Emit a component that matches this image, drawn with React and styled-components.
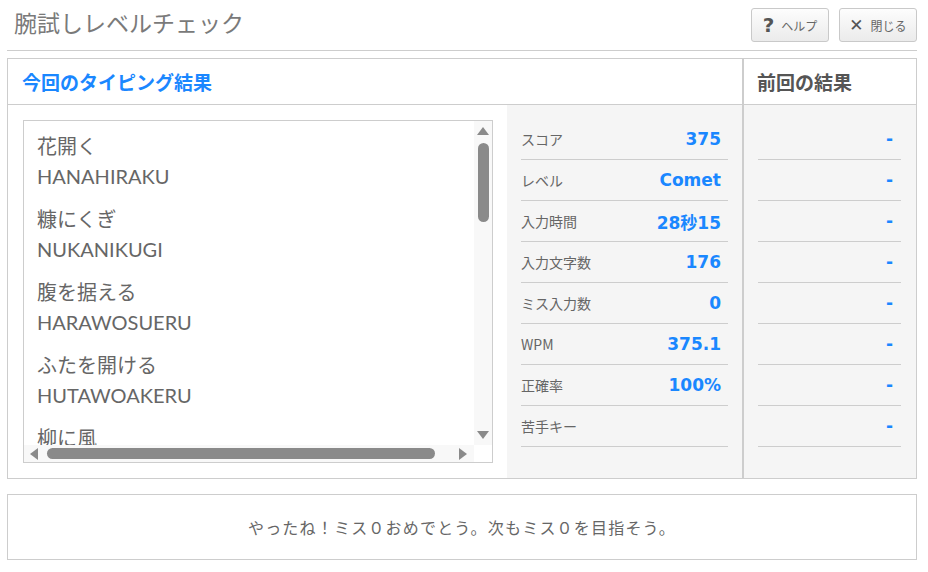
import React from 'react';
import styled, { createGlobalStyle } from 'styled-components';

const GlobalStyle = createGlobalStyle`
  * { box-sizing: border-box; }
  body {
    margin: 0;
    background: #fff;
    color: #666;
    font-family: "Noto Sans CJK JP", "Noto Sans", sans-serif;
  }
`;

const BLUE = '#1a87ff';
const LINE = '#cdcdcd';

const Header = styled.header`
  display: flex;
  align-items: flex-start;
  justify-content: space-between;
  height: 51px;
  margin: 0 11px 0 7px;
  border-bottom: 1px solid ${LINE};
`;

const Title = styled.h1`
  margin: 0;
  padding: 7px 0 0 7px;
  font-size: 23px;
  line-height: 30px;
  font-weight: normal;
  color: #7a7a7a;
`;

const Tools = styled.div`
  display: flex;
  gap: 10px;
  padding-top: 8px;
`;

const ToolButton = styled.button`
  display: flex;
  align-items: center;
  justify-content: center;
  gap: 7px;
  width: 78px;
  height: 34px;
  padding: 0;
  border: 1px solid #c9c9c9;
  border-radius: 3px;
  background: linear-gradient(#fdfdfd, #ebebeb);
  color: #666;
  font-family: "Noto Sans CJK JP", sans-serif;
  font-size: 12px;
`;

const ToolIcon = styled.span`
  font-family: "DejaVu Sans", sans-serif;
  font-weight: bold;
  font-size: ${p => p.size}px;
  color: #555;
  line-height: 1;
`;

const Panel = styled.section`
  display: grid;
  grid-template-columns: 1fr 173px;
  margin: 7px 11px 0 7px;
  border: 1px solid ${LINE};
`;

const Column = styled.div`
  display: flex;
  flex-direction: column;
  border-${p => p.side}: 1px solid ${LINE};
`;

const ColumnHead = styled.h2`
  display: flex;
  align-items: center;
  height: 46px;
  margin: 0;
  padding-left: ${p => p.indent}px;
  border-bottom: 1px solid ${LINE};
  font-size: 19px;
  font-weight: bold;
  color: ${p => p.color};
`;

const Body = styled.div`
  display: grid;
  grid-template-columns: 1fr 235px;
  height: 373px;
`;

const ListCell = styled.div`
  padding: 15px 14px 15px 15px;
`;

const ListBox = styled.div`
  display: grid;
  grid-template-columns: minmax(0, 1fr) 18px;
  grid-template-rows: minmax(0, 1fr) 17px;
  height: 343px;
  border: 1px solid ${LINE};
`;

const ListContent = styled.div`
  overflow: hidden;
  min-height: 0;
  padding: 10px 0 0 13px;
  font-family: "Lato", "Noto Sans CJK JP", sans-serif;
  font-size: 20px;
  line-height: 30px;
  color: #666;
`;

const Entry = styled.div`
  margin-bottom: 13px;
`;

const VTrack = styled.div`
  display: flex;
  flex-direction: column;
  align-items: center;
  padding: 6px 0 6px;
  background: #f8f8f8;
`;

const HTrack = styled.div`
  display: flex;
  align-items: center;
  padding: 0 7px 0 6px;
  background: #f8f8f8;
`;

const Corner = styled.div`
  background: #fff;
`;

const Arrow = styled.span`
  width: 0;
  height: 0;
  flex: none;
  ${p => p.dir === 'up' && `border-left: 6px solid transparent; border-right: 6px solid transparent; border-bottom: 8px solid #8a8a8a;`}
  ${p => p.dir === 'down' && `border-left: 6px solid transparent; border-right: 6px solid transparent; border-top: 8px solid #8a8a8a; margin-top: auto;`}
  ${p => p.dir === 'left' && `border-top: 6px solid transparent; border-bottom: 6px solid transparent; border-right: 8px solid #8a8a8a;`}
  ${p => p.dir === 'right' && `border-top: 6px solid transparent; border-bottom: 6px solid transparent; border-left: 8px solid #8a8a8a; margin-left: auto;`}
`;

const Thumb = styled.span`
  flex: none;
  background: #8a8a8a;
  border-radius: 6px;
  ${p => p.vertical
    ? `width: 11px; height: 79px; margin-top: 8px;`
    : `height: 11px; width: 388px; margin-left: 9px;`}
`;

const StatsCell = styled.div`
  padding: 14px 14px 0 14px;
  background: #f5f5f5;
`;

const PrevBody = styled.div`
  flex: 1;
  padding: 14px 15px 0 14px;
  background: #f5f5f5;
`;

const StatRow = styled.div`
  display: flex;
  align-items: center;
  justify-content: space-between;
  height: 41px;
  padding-right: ${p => p.pad}px;
  border-bottom: 1px solid ${LINE};
`;

const StatLabel = styled.span`
  font-size: 14px;
  color: #666;
`;

const StatValue = styled.span`
  font-family: "DejaVu Sans", "Noto Sans CJK JP", sans-serif;
  font-weight: bold;
  font-size: 17px;
  color: ${BLUE};
`;

const Message = styled.div`
  display: flex;
  align-items: center;
  justify-content: center;
  height: 66px;
  margin: 15px 11px 0 7px;
  border: 1px solid ${LINE};
  font-size: 16px;
  letter-spacing: 1.2px;
  color: #666;
`;

const words = [
  ['花開く', 'HANAHIRAKU'],
  ['糠にくぎ', 'NUKANIKUGI'],
  ['腹を据える', 'HARAWOSUERU'],
  ['ふたを開ける', 'HUTAWOAKERU'],
  ['柳に風', 'YANAGINIKAZE'],
];

const stats = [
  ['スコア', '375'],
  ['レベル', 'Comet'],
  ['入力時間', '28秒15'],
  ['入力文字数', '176'],
  ['ミス入力数', '0'],
  ['WPM', '375.1'],
  ['正確率', '100%'],
  ['苦手キー', ''],
];

export default function App() {
  return (
    <div>
      <GlobalStyle />
      <Header>
        <Title>腕試しレベルチェック</Title>
        <Tools>
          <ToolButton>
            <ToolIcon size={20}>?</ToolIcon>
            ヘルプ
          </ToolButton>
          <ToolButton>
            <ToolIcon size={17}>✕</ToolIcon>
            閉じる
          </ToolButton>
        </Tools>
      </Header>

      <Panel>
        <Column side="right">
          <ColumnHead indent={14} color={BLUE}>今回のタイピング結果</ColumnHead>
          <Body>
            <ListCell>
              <ListBox>
                <ListContent>
                  {words.map(([jp, roma]) => (
                    <Entry key={roma}>
                      <div>{jp}</div>
                      <div>{roma}</div>
                    </Entry>
                  ))}
                </ListContent>
                <VTrack>
                  <Arrow dir="up" />
                  <Thumb vertical />
                  <Arrow dir="down" />
                </VTrack>
                <HTrack>
                  <Arrow dir="left" />
                  <Thumb />
                  <Arrow dir="right" />
                </HTrack>
                <Corner />
              </ListBox>
            </ListCell>
            <StatsCell>
              {stats.map(([label, value]) => (
                <StatRow key={label} pad={7}>
                  <StatLabel>{label}</StatLabel>
                  <StatValue>{value}</StatValue>
                </StatRow>
              ))}
            </StatsCell>
          </Body>
        </Column>

        <Column side="left">
          <ColumnHead indent={13} color="#555">前回の結果</ColumnHead>
          <PrevBody>
            {stats.map(([label]) => (
              <StatRow key={label} pad={8}>
                <span />
                <StatValue>-</StatValue>
              </StatRow>
            ))}
          </PrevBody>
        </Column>
      </Panel>

      <Message>やったね！ミス０おめでとう。次もミス０を目指そう。</Message>
    </div>
  );
}
